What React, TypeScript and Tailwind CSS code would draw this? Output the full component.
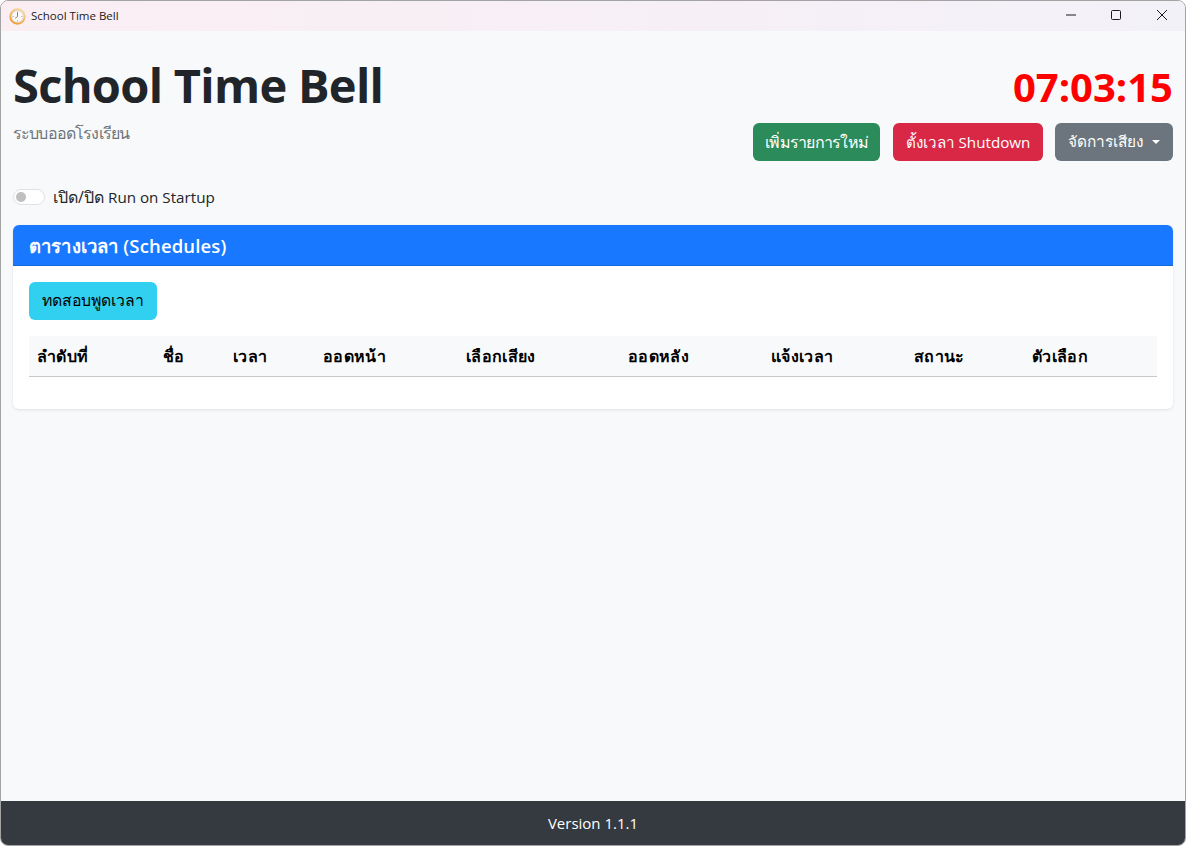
const headers = [
  { label: 'ลำดับที่', width: 'w-[126px]' },
  { label: 'ชื่อ', width: 'w-[70px]' },
  { label: 'เวลา', width: 'w-[90px]' },
  { label: 'ออดหน้า', width: 'w-[143px]' },
  { label: 'เลือกเสียง', width: 'w-[162px]' },
  { label: 'ออดหลัง', width: 'w-[143px]' },
  { label: 'แจ้งเวลา', width: 'w-[143px]' },
  { label: 'สถานะ', width: 'w-[118px]' },
  { label: 'ตัวเลือก', width: 'w-[133px]' },
];

function ClockIcon() {
  return (
    <svg width="17" height="17" viewBox="0 0 17 17" aria-hidden="true">
      <defs>
        <linearGradient id="ring" x1="0.8" y1="0" x2="0.2" y2="1">
          <stop offset="0" stopColor="#f8d9a4" />
          <stop offset="1" stopColor="#eb9a35" />
        </linearGradient>
      </defs>
      <circle cx="8.5" cy="8.5" r="7.2" fill="#fbfaf8" stroke="url(#ring)" strokeWidth="2" />
      <circle cx="8.5" cy="8.5" r="5.7" fill="none" stroke="#c4bdb0" strokeWidth="0.5" />
      <path d="M8.5 3.6V5M13.4 8.5H12M8.5 13.4V12M3.6 8.5H5" stroke="#a8a297" strokeWidth="0.7" />
      <path d="M8.5 4.8V8.5L6.4 10.2" fill="none" stroke="#77716a" strokeWidth="0.9" strokeLinecap="round" />
    </svg>
  );
}

function TitleBar() {
  return (
    <div className="flex h-[30px] shrink-0 items-center justify-between bg-gradient-to-r from-[#faeef3] to-[#f3f1f8]">
      <div className="flex items-center pl-[8px]">
        <ClockIcon />
        <span className="ml-[5px] font-['Open_Sans',sans-serif] text-[11.5px] text-[#1a1a1a]">School Time Bell</span>
      </div>
      <div className="flex self-start">
        <div className="mr-[-1px] flex h-[28px] w-[46px] items-center justify-center">
          <svg width="10" height="10" viewBox="0 0 10 10" aria-hidden="true">
            <path d="M0 5H10" stroke="#1a1a1a" strokeWidth="1" />
          </svg>
        </div>
        <div className="flex h-[28px] w-[46px] items-center justify-center">
          <svg width="10" height="10" viewBox="0 0 10 10" aria-hidden="true">
            <rect x="0.5" y="0.5" width="9" height="9" rx="1" fill="none" stroke="#1a1a1a" strokeWidth="1" />
          </svg>
        </div>
        <div className="flex h-[28px] w-[46px] items-center justify-center">
          <svg width="10" height="10" viewBox="0 0 10 10" aria-hidden="true">
            <path d="M0 0L10 10M10 0L0 10" stroke="#1a1a1a" strokeWidth="1" />
          </svg>
        </div>
      </div>
    </div>
  );
}

export default function App() {
  return (
    <div className="flex h-[846px] w-[1186px] flex-col overflow-hidden rounded-[8px] border border-[#a3a3a3] bg-[#f8f9fa] font-['Open_Sans','Noto_Sans',sans-serif] text-[16px] text-[#212529]">
      <TitleBar />

      <main className="flex flex-1 flex-col px-[12px]">
        <header className="mt-[20px] flex items-start justify-between">
          <div>
            <h1 className="mt-[-2px] text-[47px] leading-[72px] font-bold tracking-[-0.7px]">School Time Bell</h1>
            <p className="text-[16px] leading-[24px] tracking-[-0.85px] text-[#6c757d]">ระบบออดโรงเรียน</p>
          </div>
          <div className="flex flex-col items-end">
            <div className="mt-[9px] text-[40px] leading-[54px] font-bold text-[#ff0000]">07:03:15</div>
            <div className="mt-[9px] flex gap-[12px]">
              <button type="button" className="mr-[1px] flex h-[38px] w-[127px] items-center justify-center rounded-[6px] bg-[#2b8b5a] tracking-[-0.75px] text-white">เพิ่มรายการใหม่</button>
              <button type="button" className="flex h-[38px] w-[150px] items-center justify-center rounded-[6px] bg-[#d92845] text-[15.2px] text-white">ตั้งเวลา Shutdown</button>
              <button type="button" className="flex h-[38px] w-[118px] items-center justify-center rounded-[6px] bg-[#6c757d] text-[15.4px] text-white">
                จัดการเสียง
                <span className="ml-[8px] h-0 w-0 border-x-[4.5px] border-t-[4.5px] border-x-transparent border-t-white" />
              </button>
            </div>
          </div>
        </header>

        <div className="mt-[24px] flex items-center">
          <span className="flex h-[16px] w-[32px] items-center rounded-full border border-[#dee2e6] bg-white pl-[2px]">
            <span className="h-[10px] w-[10px] rounded-full bg-[#bfbfbf]" />
          </span>
          <span className="ml-[8px] leading-[24px]">เปิด/ปิด <span className="text-[15.2px]">Run on Startup</span></span>
        </div>

        <section className="mt-[16px] overflow-hidden rounded-[6px] bg-white shadow-[0_1px_3px_rgba(0,0,0,0.1)]">
          <div className="flex h-[41px] items-center border-b border-[#1468d8] bg-[#1878ff] px-[16px] pt-[1px] text-[18.5px] font-semibold tracking-[0.15px] text-white">
            ตารางเวลา (Schedules)
          </div>
          <div className="px-[16px] pt-[16px] pb-[32px]">
            <button type="button" className="flex h-[38px] w-[128px] items-center justify-center rounded-[6px] bg-[#32d0f0] text-[15.8px] text-black">ทดสอบพูดเวลา</button>
            <table className="mt-[16px] w-full table-fixed border-collapse">
              <thead>
                <tr className="h-[40px] border-b border-[#c8c9ca] bg-[#f8f9fa]">
                  {headers.map((h) => (
                    <th key={h.label} className={`${h.width} px-[8px] text-left text-[16px] font-bold tracking-[0.35px] text-black`}>{h.label}</th>
                  ))}
                </tr>
              </thead>
            </table>
          </div>
        </section>
      </main>

      <footer className="flex h-[44px] shrink-0 items-center justify-center bg-[#343a40] text-[15px] text-white">Version 1.1.1</footer>
    </div>
  );
}
